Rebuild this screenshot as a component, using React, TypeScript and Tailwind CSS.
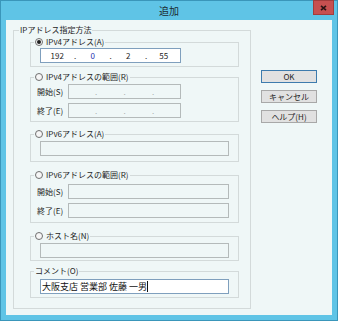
import React from 'react';

const font = "font-['Noto_Sans_CJK_JP','Liberation_Sans',sans-serif]";

function Radio({ checked = false }: { checked?: boolean }) {
  return (
    <span className="w-[8px] h-[8px] rounded-full border border-[#6f6f6f] bg-[#f6f6f6] flex items-center justify-center">
      {checked && <span className="w-[4px] h-[4px] rounded-full bg-[#1f1f1f]" />}
    </span>
  );
}

function GroupBox({
  label,
  radio,
  checked,
  className,
  bodyClass,
  children,
}: {
  label: string;
  radio?: boolean;
  checked?: boolean;
  className?: string;
  bodyClass?: string;
  children: React.ReactNode;
}) {
  return (
    <fieldset className={`border border-[#d3dada] ${className || ''}`}>
      <legend className="ml-[3px] px-[1px] h-[10px] leading-[10px]">
        <span className="flex items-center gap-[3px] text-[8px] text-[#1e1e1e]">
          {radio && <Radio checked={checked} />}
          {label}
        </span>
      </legend>
      <div className={bodyClass}>{children}</div>
    </fieldset>
  );
}

// 4 octets separated by dots
function IpBox({
  values,
  enabled,
  className,
}: {
  values?: string[];
  enabled?: boolean;
  className?: string;
}) {
  const vals = values || ['', '', '', ''];
  return (
    <div
      className={`h-[15px] border flex items-center text-[8px] leading-none ${
        enabled ? 'bg-white border-[#7f9fbd]' : 'bg-[#eff7f7] border-[#b4baba]'
      } ${className || ''}`}
    >
      {vals.map((v, i) => (
        <React.Fragment key={i}>
          <span className={`flex-1 text-center ${i === 1 ? 'text-[#1d2fb0]' : 'text-[#1e1e1e]'}`}>{v}</span>
          {i < 3 && (
            <span className={`w-[3px] text-center ${enabled ? 'text-[#1e1e1e]' : 'text-[#a8adad]'}`}>.</span>
          )}
        </React.Fragment>
      ))}
    </div>
  );
}

function DisabledBox({ className }: { className?: string }) {
  return <div className={`h-[15px] border border-[#b4baba] bg-[#eff7f7] ${className || ''}`} />;
}

function RangeRow({ label, children, className }: { label: string; children: React.ReactNode; className?: string }) {
  return (
    <div className={`flex items-center ${className || ''}`}>
      <span className="w-[31px] text-[8px] text-[#1e1e1e]">{label}</span>
      {children}
    </div>
  );
}

function Button({ label, primary }: { label: string; primary?: boolean }) {
  return (
    <button
      className={`w-[56px] h-[13px] bg-[#e1e1e1] border text-[8px] leading-none text-[#1e1e1e] flex items-center justify-center ${
        primary ? 'border-[#3d7bad]' : 'border-[#a8a8a8]'
      }`}
    >
      {label}
    </button>
  );
}

export default function App() {
  return (
    <div className={`w-[338px] h-[321px] bg-[#5fc4e6] border border-[#3a96ba] flex flex-col ${font}`}>
      {/* Title bar */}
      <div className="relative h-[19px] flex items-center justify-center">
        <span className="text-[10px] text-[#1b2a30]">追加</span>
        <div className="absolute top-[-1px] right-[3px] w-[21px] h-[15px] bg-[#c75050] border border-[#a23c3c] flex items-center justify-center">
          <svg width="7" height="6" viewBox="0 0 7 6">
            <path d="M1 0.8 L6 5.2 M6 0.8 L1 5.2" stroke="#2a1414" strokeWidth="1.6" />
          </svg>
        </div>
      </div>

      {/* Body */}
      <div className="flex-1 mx-[5px] mb-[5px] bg-[#eff7f7] flex items-start">
        <fieldset className="ml-[7px] mt-[5px] w-[238px] border border-[#d3dada]">
          <legend className="ml-[5px] px-[1px] h-[10px] leading-[10px] text-[8px] text-[#1e1e1e]">IPアドレス指定方法</legend>

          <div className="pl-[16px] pr-[11px] pb-[10px]">
            <GroupBox label="IPv4アドレス(A)" radio checked className="mt-[2px]" bodyClass="pl-[9px] pb-[3px]">
              <IpBox enabled values={['192', '0', '2', '55']} className="mt-[1px] w-[141px]" />
            </GroupBox>

            <GroupBox label="IPv4アドレスの範囲(R)" radio className="mt-[5px]" bodyClass="pl-[6px] pb-[3px]">
              <RangeRow label="開始(S)" className="mt-[2px]">
                <IpBox className="w-[113px]" />
              </RangeRow>
              <RangeRow label="終了(E)" className="mt-[4px]">
                <IpBox className="w-[113px]" />
              </RangeRow>
            </GroupBox>

            <GroupBox label="IPv6アドレス(A)" radio className="mt-[7px]" bodyClass="px-[9px] pb-[5px]">
              <DisabledBox className="mt-[2px]" />
            </GroupBox>

            <GroupBox label="IPv6アドレスの範囲(R)" radio className="mt-[8px]" bodyClass="pl-[6px] pr-[9px] pb-[4px]">
              <RangeRow label="開始(S)" className="mt-[4px]">
                <DisabledBox className="flex-1" />
              </RangeRow>
              <RangeRow label="終了(E)" className="mt-[4px]">
                <DisabledBox className="flex-1" />
              </RangeRow>
            </GroupBox>

            <GroupBox label="ホスト名(N)" radio className="mt-[8px]" bodyClass="px-[9px] pb-[2px]">
              <DisabledBox className="mt-[2px]" />
            </GroupBox>

            <GroupBox label="コメント(O)" className="mt-[5px]" bodyClass="px-[9px] pb-[3px]">
              <div className="mt-[3px] h-[15px] bg-white border border-[#7f9fbd] flex items-center pl-[1px] text-[9px] leading-none text-[#111]">
                <span className="whitespace-pre">大阪支店 営業部 佐藤 一男</span>
                <span className="w-px h-[11px] bg-[#111]" />
              </div>
            </GroupBox>
          </div>
        </fieldset>

        <div className="ml-[10px] mt-[50px] flex flex-col gap-[7px]">
          <Button label="OK" primary />
          <Button label="キャンセル" />
          <Button label="ヘルプ(H)" />
        </div>
      </div>
    </div>
  );
}
